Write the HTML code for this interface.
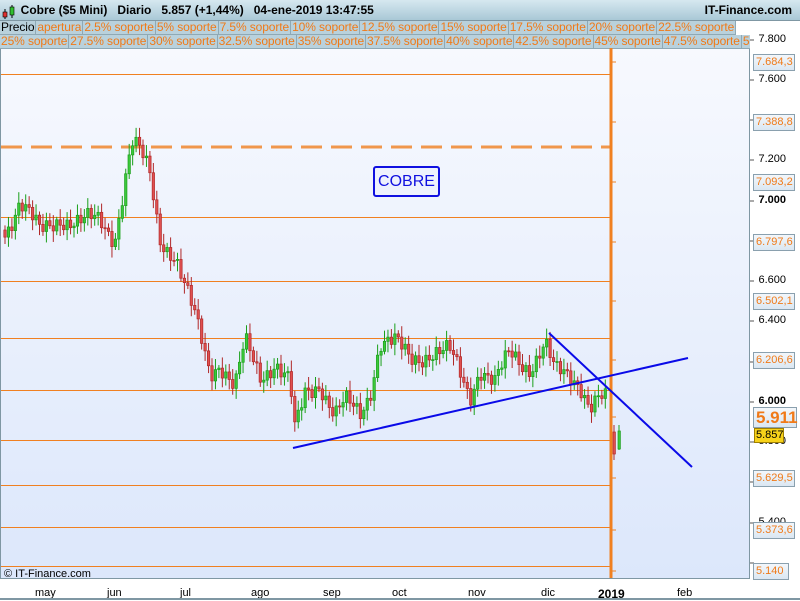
<!DOCTYPE html>
<html><head><meta charset="utf-8"><style>
*{margin:0;padding:0;box-sizing:border-box}
body{width:800px;height:600px;overflow:hidden;background:#fff;font-family:"Liberation Sans",sans-serif;position:relative}
#hdr{position:absolute;left:0;top:0;width:800px;height:21px;background:linear-gradient(#d6e8f0,#a9c8d6);border-bottom:1px solid #7f97a3;font-size:12px;font-weight:bold;line-height:21px;white-space:pre}
.row{position:absolute;left:0;height:14px;font-size:12px;line-height:13px;white-space:nowrap;display:flex}
.row span{color:#f07a18;background:#b9d1dc;border-right:1px solid #8fa9b5;border-bottom:1px solid #8fa9b5;padding:0 1px 0 1px;height:14px;letter-spacing:-0.1px}
.row span.k{color:#000}
.ax{position:absolute;right:14px;font-size:11px}
.lb{position:absolute;left:753px;width:42px;height:17px;border:1px solid #8aa0ae;background:linear-gradient(#f3f7fb,#dbe7f2);color:#f07a18;font-size:11px;line-height:15px;padding-left:2px}
.xl{position:absolute;top:587px;font-size:11px}
</style></head><body>
<div id="hdr"> <span style="display:inline-block;width:14px"></span> Cobre ($5 Mini)   Diario   5.857 (+1,44%)   04-ene-2019 13:47:55<span style="position:absolute;right:8px">IT-Finance.com</span></div>
<svg style="position:absolute;left:2px;top:4px" width="14" height="16"><line x1="3" y1="5" x2="3" y2="15" stroke="#000"/><rect x="1" y="8" width="4" height="5" fill="#e03030" stroke="#000" stroke-width=".6"/><line x1="10" y1="1" x2="10" y2="14" stroke="#000"/><rect x="8" y="3" width="4" height="8" fill="#30c030" stroke="#000" stroke-width=".6"/></svg>
<div class="row" style="top:21px"><span class="k">Precio</span><span>apertura</span><span>2.5% soporte</span><span>5% soporte</span><span>7.5% soporte</span><span>10% soporte</span><span>12.5% soporte</span><span>15% soporte</span><span>17.5% soporte</span><span>20% soporte</span><span>22.5% soporte</span></div>
<div class="row" style="top:35px;width:750px;overflow:hidden"><span>25% soporte</span><span>27.5% soporte</span><span>30% soporte</span><span>32.5% soporte</span><span>35% soporte</span><span>37.5% soporte</span><span>40% soporte</span><span>42.5% soporte</span><span>45% soporte</span><span>47.5% soporte</span><span>50% soporte</span></div>
<div style="position:absolute;left:0;top:49px;width:750px;height:530px;background:linear-gradient(#f7f9fe,#dce7fb);border-left:1px solid #7f97a3;border-right:1px solid #7f97a3;border-bottom:1px solid #7f97a3"></div>
<svg id="ch" style="position:absolute;left:0;top:0" width="800" height="600"></svg>
<div class="ax" style="top:33px">7.800</div><div class="ax" style="top:73px">7.600</div><div class="ax" style="top:113px">7.400</div><div class="ax" style="top:153px">7.200</div><div class="ax" style="top:194px;font-weight:bold">7.000</div><div class="ax" style="top:234px">6.800</div><div class="ax" style="top:274px">6.600</div><div class="ax" style="top:314px">6.400</div><div class="ax" style="top:355px">6.200</div><div class="ax" style="top:395px;font-weight:bold">6.000</div><div class="ax" style="top:435px">5.800</div><div class="ax" style="top:516px">5.400</div>
<div class="lb" style="top:54px">7.684,3</div><div class="lb" style="top:114px">7.388,8</div><div class="lb" style="top:174px">7.093,2</div><div class="lb" style="top:234px">6.797,6</div><div class="lb" style="top:293px">6.502,1</div><div class="lb" style="top:352px">6.206,6</div>
<div class="lb" style="top:407px;height:21px;font-size:17px;font-weight:bold;line-height:19px;width:44px">5.911</div>
<div style="position:absolute;left:754px;top:428px;width:30px;height:15px;background:#f7d21a;border:1px solid #a08000;font-size:11px;line-height:13px;padding-left:1px">5.857</div>
<div class="lb" style="top:470px">5.629,5</div><div class="lb" style="top:522px">5.373,6</div><div class="lb" style="top:563px;width:36px">5.140</div>
<div style="position:absolute;left:373px;top:166px;width:67px;height:31px;border:2px solid #1010e0;border-radius:3px;color:#1010e0;font-size:16px;line-height:27px;text-align:center;background:#eef2fd">COBRE</div>
<div style="position:absolute;left:4px;top:568px;font-size:11px">© IT-Finance.com</div>
<div class="xl" style="left:35px">may</div><div class="xl" style="left:107px">jun</div><div class="xl" style="left:180px">jul</div><div class="xl" style="left:251px">ago</div><div class="xl" style="left:323px">sep</div><div class="xl" style="left:392px">oct</div><div class="xl" style="left:468px">nov</div><div class="xl" style="left:541px">dic</div><div class="xl" style="left:598px;font-weight:bold;font-size:12px">2019</div><div class="xl" style="left:677px">feb</div>
<div style="position:absolute;left:0;top:598px;width:800px;height:2px;background:#7f97a3"></div>
<script>
var s='';
[74,217,281,338,390,440,485,527,566].forEach(function(y){s+='<line x1="1" x2="611" y1="'+y+'.5" y2="'+y+'.5" stroke="#f08020" stroke-width="1"/>';});
s+='<line x1="1" x2="611" y1="147" y2="147" stroke="#f08020" stroke-width="3" stroke-dasharray="21,9" opacity=".8"/>';
[40,80,120,160,201,241,281,321,362,402,442,482,523,563].forEach(function(y){s+='<line x1="750" x2="754" y1="'+y+'" y2="'+y+'" stroke="#555"/>';});
[62,122,182,242,301,360,417,478,530,571].forEach(function(y){s+='<line x1="611" x2="616" y1="'+y+'" y2="'+y+'" stroke="#f08020"/>';});
var k=[[5,230],[20,200],[40,235],[60,215],[80,225],[100,220],[115,235],[125,180],[132,145],[140,155],[150,175],[160,235],[175,255],[185,290],[200,335],[210,370],[220,360],[235,390],[245,345],[260,375],[275,360],[290,385],[295,435],[305,395],[320,380],[335,415],[345,405],[360,415],[370,390],[380,340],[395,345],[410,360],[430,350],[450,355],[470,395],[480,365],[495,385],[510,355],[530,365],[545,345],[555,375],[570,375],[580,380],[590,405],[600,400],[608,405]];
function f(x){for(var i=0;i<k.length-1;i++){if(x<=k[i+1][0]){var t=(x-k[i][0])/(k[i+1][0]-k[i][0]);return k[i][1]+t*(k[i+1][1]-k[i][1]);}}return k[k.length-1][1];}
var prev=f(5);
for(var x=5;x<=608;x+=3.45){var c=f(x)+Math.sin(x*1.7)*9+Math.sin(x*0.63)*6;var o=prev;prev=c;
var up=c<o,t=Math.min(o,c),b=Math.max(o,c);if(b-t<1)b=t+1;var col=up?'#1aa01a':'#b02828',fill=up?'#3cc83c':'#e05050';
var hi=t-3-Math.abs(Math.sin(x*3.1))*8,lo=b+3+Math.abs(Math.cos(x*2.3))*8;
s+='<line x1="'+x+'" x2="'+x+'" y1="'+hi+'" y2="'+lo+'" stroke="'+col+'" stroke-width="1"/><rect x="'+(x-1.2)+'" y="'+t+'" width="2.4" height="'+(b-t)+'" fill="'+fill+'" stroke="'+col+'" stroke-width=".7"/>';}
s+='<line x1="611" x2="611" y1="48" y2="578" stroke="#f08020" stroke-width="3"/>';
s+='<line x1="614" x2="614" y1="425" y2="460" stroke="#b02828"/><rect x="613" y="432" width="2.4" height="22" fill="#e05050" stroke="#b02828" stroke-width=".7"/>';
s+='<line x1="619" x2="619" y1="425" y2="450" stroke="#1aa01a"/><rect x="618" y="431" width="2.4" height="18" fill="#3cc83c" stroke="#1aa01a" stroke-width=".7"/>';
s+='<line x1="293" y1="448" x2="688" y2="358" stroke="#0a0ae8" stroke-width="2"/><line x1="549" y1="333" x2="692" y2="467" stroke="#0a0ae8" stroke-width="2"/>';
document.getElementById('ch').innerHTML=s;
</script>
</body></html>
